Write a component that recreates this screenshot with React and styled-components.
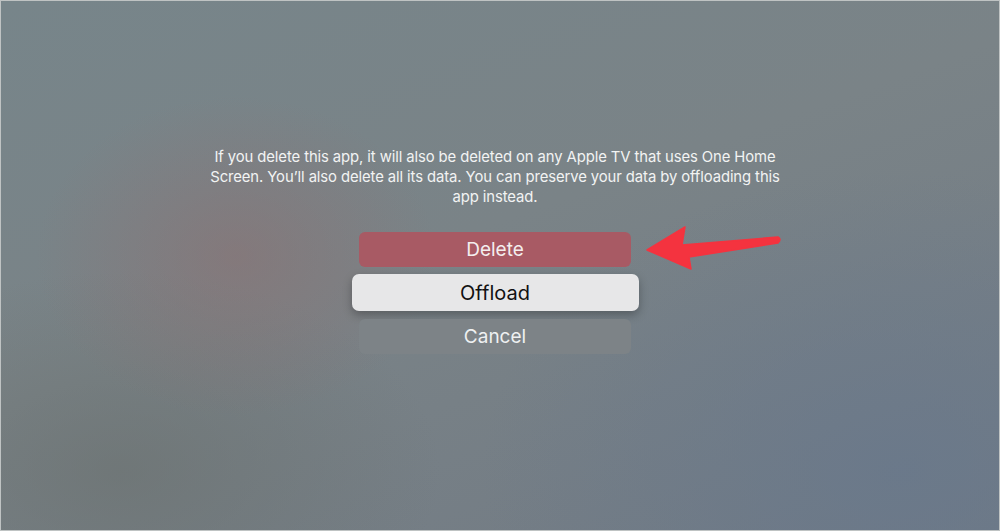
import React from "react";
import styled, { createGlobalStyle } from "styled-components";

const GlobalStyle = createGlobalStyle`
  html, body {
    margin: 0;
    padding: 0;
    background: #b9bdbd;
  }
  * {
    box-sizing: border-box;
  }
`;

const Screen = styled.div`
  position: relative;
  width: 1000px;
  height: 531px;
  overflow: hidden;
  border: 1px solid #bfc3c3;
  background:
    radial-gradient(ellipse 200px 160px at 235px 255px, rgba(146, 106, 106, 0.42), rgba(146, 106, 106, 0) 100%),
    radial-gradient(ellipse 320px 200px at 120px 470px, rgba(106, 112, 110, 0.6), rgba(106, 112, 110, 0) 100%),
    radial-gradient(ellipse 420px 300px at 900px 470px, rgba(104, 120, 140, 0.75), rgba(104, 120, 140, 0) 100%),
    linear-gradient(160deg, #77858a 0%, #7a8387 45%, #717a84 100%);
  font-family: Inter, "Liberation Sans", sans-serif;
  display: flex;
  flex-direction: column;
  align-items: center;
  padding: 146px 10px 0 0;
`;

const Message = styled.p`
  margin: 0;
  width: 590px;
  color: #f2f3f3;
  font-size: 14.85px;
  line-height: 20px;
  text-align: center;
  letter-spacing: -0.1px;
`;

const ButtonStack = styled.div`
  margin-top: 25px;
  display: flex;
  flex-direction: column;
  align-items: center;
  gap: 7px;
`;

const Button = styled.div`
  display: flex;
  align-items: center;
  justify-content: center;
  width: ${(p) => (p.$focused ? "287px" : "272px")};
  height: ${(p) => (p.$focused ? "37px" : "35px")};
  border-radius: ${(p) => (p.$focused ? "7px" : "6px")};
  background: ${(p) => p.$bg};
  color: ${(p) => p.$color};
  font-size: ${(p) => (p.$focused ? "20px" : "19px")};
  font-weight: 400;
  box-shadow: ${(p) => (p.$focused ? "0 4px 10px rgba(0,0,0,0.28)" : "none")};
  margin-bottom: ${(p) => (p.$focused ? "1px" : "0")};
`;

const Overlay = styled.svg`
  position: absolute;
  left: 0;
  top: 0;
  width: 1000px;
  height: 531px;
  pointer-events: none;
`;

export default function App() {
  return (
    <>
      <GlobalStyle />
      <Screen>
        <Message>
          If you delete this app, it will also be deleted on any Apple TV that uses One Home
          Screen. You’ll also delete all its data. You can preserve your data by offloading this
          app instead.
        </Message>
        <ButtonStack>
          <Button $bg="#a85a64" $color="#f4eeee">Delete</Button>
          <Button $focused $bg="#e7e7e8" $color="#111">Offload</Button>
          <Button $bg="#7d8387" $color="#eef0f1">Cancel</Button>
        </ButtonStack>
        <Overlay viewBox="0 0 1000 531">
          <path
            d="M646 249 L684 226 L681 244 L777 236 Q781 238 777 242 L688 256 L690 268 Z"
            fill="#f4333f"
            stroke="#f4333f"
            strokeWidth="1.5"
            strokeLinejoin="round"
          />
        </Overlay>
      </Screen>
    </>
  );
}
